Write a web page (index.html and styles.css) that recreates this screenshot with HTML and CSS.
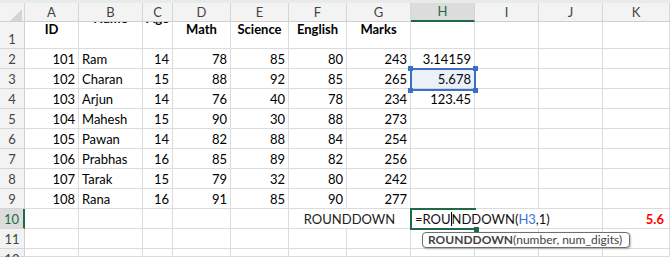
FILE: index.html
```html
<!DOCTYPE html>
<html>
<head>
<meta charset="utf-8">
<link rel="stylesheet" href="styles.css">
</head>
<body>
<div class="band"></div>
<div class="wrap">
  <div class="sheet">
    <div class="corner"><svg width="25" height="19" viewBox="0 0 25 19"><polygon points="22,6 22,18 10,18" fill="#d4d4d4"/></svg></div>
    <div class="ch">A</div><div class="ch">B</div><div class="ch">C</div><div class="ch">D</div><div class="ch">E</div><div class="ch">F</div><div class="ch">G</div><div class="ch sel">H</div><div class="ch">I</div><div class="ch">J</div><div class="ch">K</div>

    <div class="rh r1">1</div>
    <div class="c hd"><span>ID</span></div>
    <div class="c hd"><span class="up">Name</span></div>
    <div class="c hd"><span class="up">Age</span></div>
    <div class="c hd"><span>Math</span></div>
    <div class="c hd"><span>Science</span></div>
    <div class="c hd"><span>English</span></div>
    <div class="c hd"><span>Marks</span></div>
    <div class="c hd"><span class="up up2">ROUND</span></div>
    <div class="c"></div><div class="c"></div><div class="c"></div>

    <div class="rh">2</div><div class="c n">101</div><div class="c t">Ram</div><div class="c n">14</div><div class="c n">78</div><div class="c n">85</div><div class="c n">80</div><div class="c n">243</div><div class="c n">3.14159</div><div class="c"></div><div class="c"></div><div class="c"></div>
    <div class="rh">3</div><div class="c n">102</div><div class="c t">Charan</div><div class="c n">15</div><div class="c n">88</div><div class="c n">92</div><div class="c n">85</div><div class="c n">265</div><div class="c n">5.678</div><div class="c"></div><div class="c"></div><div class="c"></div>
    <div class="rh">4</div><div class="c n">103</div><div class="c t">Arjun</div><div class="c n">14</div><div class="c n">76</div><div class="c n">40</div><div class="c n">78</div><div class="c n">234</div><div class="c n">123.45</div><div class="c"></div><div class="c"></div><div class="c"></div>
    <div class="rh">5</div><div class="c n">104</div><div class="c t">Mahesh</div><div class="c n">15</div><div class="c n">90</div><div class="c n">30</div><div class="c n">88</div><div class="c n">273</div><div class="c"></div><div class="c"></div><div class="c"></div><div class="c"></div>
    <div class="rh">6</div><div class="c n">105</div><div class="c t">Pawan</div><div class="c n">14</div><div class="c n">82</div><div class="c n">88</div><div class="c n">84</div><div class="c n">254</div><div class="c"></div><div class="c"></div><div class="c"></div><div class="c"></div>
    <div class="rh">7</div><div class="c n">106</div><div class="c t">Prabhas</div><div class="c n">16</div><div class="c n">85</div><div class="c n">89</div><div class="c n">82</div><div class="c n">256</div><div class="c"></div><div class="c"></div><div class="c"></div><div class="c"></div>
    <div class="rh">8</div><div class="c n">107</div><div class="c t">Tarak</div><div class="c n">15</div><div class="c n">79</div><div class="c n">32</div><div class="c n">80</div><div class="c n">242</div><div class="c"></div><div class="c"></div><div class="c"></div><div class="c"></div>
    <div class="rh">9</div><div class="c n">108</div><div class="c t">Rana</div><div class="c n">16</div><div class="c n">91</div><div class="c n">85</div><div class="c n">90</div><div class="c n">277</div><div class="c"></div><div class="c"></div><div class="c"></div><div class="c"></div>

    <div class="rh rsel">10</div><div class="c"></div><div class="c"></div><div class="c"></div><div class="c"></div><div class="c"></div><div class="c m">ROUNDDOWN</div><div class="c"></div><div class="c"></div><div class="c"></div><div class="c n red">5.6</div>
    <div class="rh">11</div><div class="c"></div><div class="c"></div><div class="c"></div><div class="c"></div><div class="c"></div><div class="c"></div><div class="c"></div><div class="c"></div><div class="c"></div><div class="c"></div><div class="c"></div>
    <div class="rh">12</div><div class="c"></div><div class="c"></div><div class="c"></div><div class="c"></div><div class="c"></div><div class="c"></div><div class="c"></div><div class="c"></div><div class="c"></div><div class="c"></div><div class="c"></div>
  </div>

  <div class="ref">
    <i class="hdl h-tl"></i><i class="hdl h-tr"></i><i class="hdl h-bl"></i><i class="hdl h-br"></i>
  </div>
  <div class="edit-text">=ROU<span class="caret"></span>NDDOWN(<span class="blue">H3</span>,1)</div>
  <div class="edit"><i class="ghdl"></i></div>
  <div class="tip"><b>ROUNDDOWN</b>(number, num_digits)</div>
</div>
</body>
</html>
```
FILE: styles.css
```css
html, body {
  margin: 0;
  padding: 0;
  background: #ffffff;
  overflow: hidden;
}
body {
  width: 670px;
  height: 257px;
  font-family: Lato, "Liberation Sans", sans-serif;
  font-size: 13px;
  color: #000;
}
.band {
  height: 3px;
  background: #e6ece8;
}
.wrap {
  position: relative;
}
.sheet {
  display: grid;
  grid-template-columns: 25px 54px 64px 30px 58px 58px 58px 64px 64px 64px 64px 67px;
  grid-template-rows: 19px 27px repeat(10, 20px) 8px;
}
.corner {
  background: #f3f3f3;
  border-right: 1px solid #d6d6d6;
  border-bottom: 1px solid #cfcfcf;
  box-sizing: border-box;
}
.corner svg { display: block; }
.ch {
  background: #f3f3f3;
  border-right: 1px solid #d6d6d6;
  border-bottom: 1px solid #cfcfcf;
  box-sizing: border-box;
  color: #444;
  text-align: center;
  line-height: 18px;
  font-size: 13px;
}
.ch.sel {
  background: #dcdcdc;
  color: #1d6b45;
  border-bottom: 2px solid #1d6b45;
  line-height: 17px;
}
.rh {
  background: #f3f3f3;
  border-right: 1px solid #cfcfcf;
  border-bottom: 1px solid #d6d6d6;
  box-sizing: border-box;
  color: #444;
  text-align: center;
  line-height: 20px;
  font-size: 13px;
}
.rh.r1 {
  line-height: 34px;
  padding-top: 0;
}
.rh.rsel {
  background: #dcdcdc;
  color: #1d6b45;
  border-right: 2px solid #1d6b45;
}
.c {
  border-right: 1px solid #dcdcdc;
  border-bottom: 1px solid #dcdcdc;
  box-sizing: border-box;
  line-height: 20px;
  overflow: hidden;
  white-space: nowrap;
}
.n {
  text-align: right;
  padding-right: 3px;
}
.t {
  text-align: left;
  padding-left: 3px;
}
.hd {
  font-weight: 700;
  text-align: center;
  line-height: 15px;
  display: flex;
  flex-direction: column;
  align-items: center;
}
.hd span { display: block; }
.hd .up { margin-top: -11px; }
.hd .up2 { margin-top: -12px; }
.m {
  grid-column: span 2;
  text-align: center;
  color: #222;
}
.red {
  color: #ff0000;
  font-weight: 700;
  padding-right: 5px;
}

/* reference highlight on H3 */
.ref {
  position: absolute;
  left: 410px;
  top: 65px;
  width: 66px;
  height: 23px;
  box-sizing: border-box;
  border: 2px solid #3a6fc6;
  background: rgba(58, 111, 198, 0.1);
}
.hdl {
  position: absolute;
  width: 5px;
  height: 5px;
  background: #3a6fc6;
}
.h-tl { left: -4px; top: -4px; }
.h-tr { right: -4px; top: -4px; }
.h-bl { left: -4px; bottom: -4px; }
.h-br { right: -4px; bottom: -4px; }

/* editing cell H10 */
.edit-text {
  position: absolute;
  left: 411px;
  top: 206px;
  width: 137px;
  height: 19px;
  background: #fff;
  padding-left: 4px;
  box-sizing: border-box;
  line-height: 20px;
  white-space: nowrap;
  color: #111;
}
.blue { color: #3a72d4; }
.caret {
  display: inline-block;
  width: 1px;
  height: 14px;
  background: #000;
  vertical-align: -2px;
}
.edit {
  position: absolute;
  left: 410px;
  top: 205px;
  width: 66px;
  height: 22px;
  box-sizing: border-box;
  border-top: 2px solid #1d6b45;
  border-bottom: 2px solid #1d6b45;
  border-left: 2px solid #1d6b45;
}
.ghdl {
  position: absolute;
  right: -3px;
  bottom: -4px;
  width: 5px;
  height: 5px;
  background: #1d6b45;
}
.tip {
  position: absolute;
  left: 422px;
  top: 229px;
  width: 208px;
  height: 16px;
  box-sizing: border-box;
  border: 1px solid #6f6f6f;
  border-radius: 4px;
  background: #fff;
  box-shadow: 1px 1px 2px rgba(0,0,0,0.25);
  font-size: 12px;
  line-height: 14px;
  padding-left: 5px;
  color: #444;
  white-space: nowrap;
}
.tip b { font-weight: 700; color: #444; }
```
